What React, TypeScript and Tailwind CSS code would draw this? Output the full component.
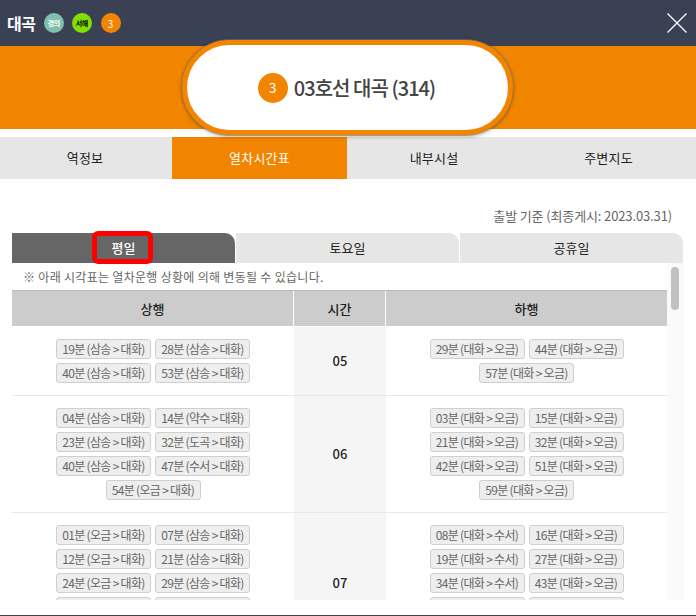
import React from 'react';

const font = { fontFamily: '"Noto Sans CJK KR", "Noto Sans", sans-serif' };

const tabs = ['역정보', '열차시간표', '내부시설', '주변지도'];
const tabWidths = ['w-[171px] pr-[1px]', 'w-[176px] pl-[1px]', 'w-[174px]', 'w-[175px]'];

interface TimeRow {
  hour: string;
  up: string[];
  down: string[];
  height: string;
}

const rows: TimeRow[] = [
  {
    hour: '05',
    height: 'h-[69px]',
    up: ['19분 (삼송 > 대화)', '28분 (삼송 > 대화)', '40분 (삼송 > 대화)', '53분 (삼송 > 대화)'],
    down: ['29분 (대화 > 오금)', '44분 (대화 > 오금)', '57분 (대화 > 오금)'],
  },
  {
    hour: '06',
    height: 'h-[117px]',
    up: [
      '04분 (삼송 > 대화)',
      '14분 (약수 > 대화)',
      '23분 (삼송 > 대화)',
      '32분 (도곡 > 대화)',
      '40분 (삼송 > 대화)',
      '47분 (수서 > 대화)',
      '54분 (오금 > 대화)',
    ],
    down: [
      '03분 (대화 > 오금)',
      '15분 (대화 > 오금)',
      '21분 (대화 > 오금)',
      '32분 (대화 > 오금)',
      '42분 (대화 > 오금)',
      '51분 (대화 > 오금)',
      '59분 (대화 > 오금)',
    ],
  },
  {
    hour: '07',
    height: 'h-[141px]',
    up: [
      '01분 (오금 > 대화)',
      '07분 (삼송 > 대화)',
      '12분 (오금 > 대화)',
      '21분 (삼송 > 대화)',
      '24분 (오금 > 대화)',
      '29분 (삼송 > 대화)',
      '34분 (오금 > 대화)',
      '38분 (삼송 > 대화)',
    ],
    down: [
      '08분 (대화 > 수서)',
      '16분 (대화 > 오금)',
      '19분 (대화 > 수서)',
      '27분 (대화 > 오금)',
      '34분 (대화 > 수서)',
      '43분 (대화 > 오금)',
      '50분 (대화 > 수서)',
      '58분 (대화 > 오금)',
    ],
  },
];

function Chip({ label }: { label: string }) {
  return (
    <span className="flex h-5 w-[95px] items-center justify-center whitespace-nowrap rounded-[3px] border border-[#cfcfcf] bg-[#eeeeee] text-[12px] leading-none tracking-[-0.7px] text-[#666666]">
      {label}
    </span>
  );
}

function ChipGroup({ items }: { items: string[] }) {
  return (
    <div className="flex flex-wrap content-start justify-center gap-1 pt-3">
      {items.map((t) => (
        <Chip key={t} label={t} />
      ))}
    </div>
  );
}

export default function App() {
  return (
    <div className="flex h-[616px] w-[696px] flex-col overflow-hidden bg-white" style={font}>
      {/* Header */}
      <div className="flex h-[46px] shrink-0 items-center bg-[#3a4155] pl-[7px] pr-[9px]">
        <h1 className="mr-2 text-[16px] font-bold leading-none tracking-[-0.4px] text-white">대곡</h1>
        <span className="mr-2 flex h-5 w-5 items-center justify-center rounded-full bg-[#7fbfae] text-[7px] font-bold tracking-[-0.5px] text-white">
          경의
        </span>
        <span className="mr-[9px] flex h-5 w-5 items-center justify-center rounded-full bg-[#81e000] text-[7px] font-bold tracking-[-0.5px] text-black">
          서해
        </span>
        <span className="flex h-5 w-5 items-center justify-center rounded-full bg-[#f28500] text-[10px] text-white">3</span>
        <svg className="ml-auto" width="20" height="20" viewBox="0 0 20 20" stroke="#ffffff" strokeWidth="1.3" fill="none">
          <path d="M0.5 0.5 L19.5 19.5 M19.5 0.5 L0.5 19.5" />
        </svg>
      </div>

      {/* Station title */}
      <div className="relative h-[83px] shrink-0 bg-[#f28500]">
        <div className="absolute left-[182px] top-[-6px] flex h-[95px] w-[331px] items-center justify-center rounded-[48px] border-[5px] border-[#f28500] bg-white pr-[2px] shadow-[0_0_0_1px_rgba(130,120,110,0.55),0_1px_4px_rgba(0,0,0,0.4)]">
          <span className="mr-[6px] flex h-[30px] w-[30px] items-center justify-center rounded-full bg-[#f28500] text-[14px] text-white">
            3
          </span>
          <span className="text-[20px] font-medium leading-none tracking-[-0.95px] text-[#444444]">03호선 대곡 (314)</span>
        </div>
      </div>

      {/* Main tabs */}
      <div className="mt-2 flex h-[42px] shrink-0 bg-[#e6e6e6]">
        {tabs.map((t, i) => (
          <div key={t} className={`flex items-center justify-center ${tabWidths[i]}`}>
            <span
              className={
                i === 1
                  ? 'flex h-full w-[175px] shrink-0 items-center justify-center bg-[#f28500] text-[13px] tracking-[0.2px] text-white'
                  : 'text-[13px] tracking-[0.2px] text-[#222222]'
              }
            >
              {t}
            </span>
          </div>
        ))}
      </div>

      <div className="flex h-[54px] shrink-0 items-end justify-end pb-[7px] pr-6 text-[13px] leading-5 tracking-[-0.13px] text-[#666666]">
        출발 기준 (최종게시: 2023.03.31)
      </div>

      {/* Day tabs */}
      <div className="mx-3 flex h-[30px] shrink-0 gap-px">
        <div className="relative flex w-[223px] items-center justify-center rounded-tr-[10px] bg-[#666666] text-[13px] font-medium text-white">
          평일
          <span className="absolute left-[80px] top-[-2px] h-[33px] w-[61px] rounded-[6px] border-[5px] border-[#ff0000]" />
        </div>
        <div className="flex w-[223px] items-center justify-center rounded-tr-[10px] bg-[#e6e6e6] text-[13px] text-[#222222]">
          토요일
        </div>
        <div className="flex w-[223px] items-center justify-center rounded-tr-[10px] bg-[#e6e6e6] text-[13px] text-[#222222]">
          공휴일
        </div>
      </div>

      {/* Scroll area */}
      <div className="mx-3 flex h-[337px] shrink-0 overflow-hidden">
        <div className="w-[655px] shrink-0">
          <p className="flex h-[27px] items-center pl-[11px] text-[12px] leading-none tracking-[0.3px] text-[#666666]">
            ※ 아래 시각표는 열차운행 상황에 의해 변동될 수 있습니다.
          </p>
          <div className="flex h-[37px] gap-px border-y border-t-[#bbbbbb] border-b-white bg-white text-[13px] font-medium text-[#222222]">
            <div className="flex w-[281px] items-center justify-center bg-[#cccccc]">상행</div>
            <div className="flex w-[91px] items-center justify-center bg-[#cccccc]">시간</div>
            <div className="flex flex-1 items-center justify-center bg-[#cccccc]">하행</div>
          </div>
          {rows.map((r) => (
            <div key={r.hour} className={`flex border-b border-[#e8e8e8] ${r.height}`}>
              <div className="w-[282px]">
                <ChipGroup items={r.up} />
              </div>
              <div className="flex w-[92px] items-center justify-center bg-[#f5f5f5] text-[13px] font-medium text-[#222222]">
                {r.hour}
              </div>
              <div className="w-[281px]">
                <ChipGroup items={r.down} />
              </div>
            </div>
          ))}
        </div>
        <div className="flex-1 bg-[#fafafa] px-1 pt-1">
          <div className="h-[43px] w-2 rounded-[4px] bg-[#c1c1c1]" />
        </div>
      </div>

      <div className="mt-auto h-px bg-[#3a4155]" />
    </div>
  );
}
